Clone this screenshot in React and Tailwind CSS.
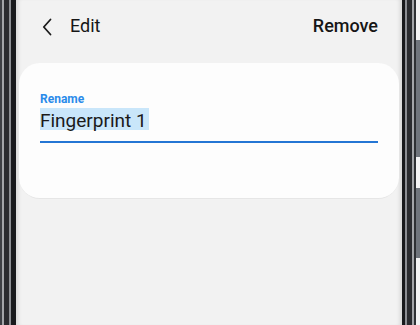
import React from "react";

function BackChevron() {
  return (
    <svg width="10" height="18" viewBox="0 0 10 18" fill="none" className="block">
      <path d="M8.5 1.5 L1.8 9 L8.5 16.5" stroke="#1c1c1c" strokeWidth="1.8" strokeLinecap="round" strokeLinejoin="round" />
    </svg>
  );
}

function LeftBezel() {
  return (
    <div className="flex h-full shrink-0">
      <div className="w-[2px] bg-[#3d3f44]" />
      <div className="w-[2px] bg-[#a3a5a9]" />
      <div className="w-[5px] bg-[#2a2b2f]" />
      <div className="w-[2px] bg-[#8c8e93]" />
      <div className="w-[5px] bg-[#18191c]" />
    </div>
  );
}

function RightBezel() {
  return (
    <div className="flex h-full shrink-0">
      <div className="w-[3px] bg-[#18191c]" />
      <div className="w-[2px] bg-[#8c8e93]" />
      <div className="w-[5px] bg-[#2a2b2f]" />
      <div className="w-[2px] bg-[#a3a5a9]" />
      <div className="w-[2px] bg-[#2e3034]" />
      <div className="flex w-[4px] flex-col bg-[#f4f4f5]">
        <div className="h-[40px]" />
        <div className="h-[117px] bg-[#70757d]" />
        <div className="h-[31px]" />
        <div className="h-[70px] bg-[#70757d]" />
      </div>
    </div>
  );
}

export default function App() {
  return (
    <div className="flex h-[325px] w-[420px] overflow-hidden bg-white font-['Roboto','Liberation_Sans',sans-serif]">
      <LeftBezel />

      <div className="flex flex-1 flex-col bg-[#f2f2f2] px-[3px] shadow-[inset_5px_0_4px_-3px_rgba(0,0,0,0.12),inset_-5px_0_4px_-3px_rgba(0,0,0,0.12)]">
        <header className="flex h-[63px] items-start justify-between pl-[23px] pr-[21px] pt-[15px]">
          <div className="flex items-center">
            <div className="mt-[2px]">
              <BackChevron />
            </div>
            <span className="ml-[18px] text-[18px] leading-[22px] text-[#161616]">Edit</span>
          </div>
          <span className="text-[18px] font-medium leading-[22px] text-[#161616]">Remove</span>
        </header>

        <section className="rounded-[21px] border-b border-[#e6e6e6] bg-[#fdfdfd] px-[21px] pb-[55px] pt-[29px]">
          <p className="text-[12px] font-bold leading-[14px] text-[#2a8bea]">Rename</p>
          <div className="mt-[2px] border-b-2 border-[#2476d4] pb-[7px]">
            <span className="inline-block h-[22px] bg-[#c9e6fa] pr-[2px] pt-[3px] text-[19px] leading-[20px] text-[#1a1a1a]">
              Fingerprint 1
            </span>
          </div>
        </section>
      </div>

      <RightBezel />
    </div>
  );
}
